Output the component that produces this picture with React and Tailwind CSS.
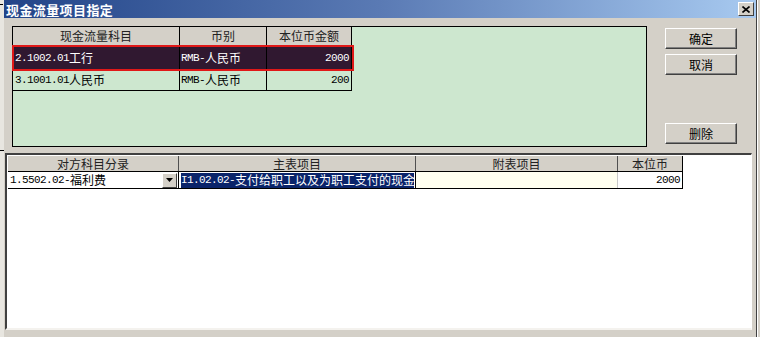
import React from 'react';

// split text so ASCII runs use a half-width mono and CJK runs a CJK face
function Txt({ s }) {
  const parts = s.split(/([\x00-\x7f]+)/).filter(Boolean);
  return (
    <>
      {parts.map((p, i) =>
        /^[\x00-\x7f]+$/.test(p) ? (
          <span key={i} className="font-['Liberation_Mono'] text-[11px] tracking-[-0.6px]">
            {p}
          </span>
        ) : (
          <span key={i} className="font-['Noto_Sans_CJK_SC'] text-[12px]">
            {p}
          </span>
        )
      )}
    </>
  );
}

function Btn({ label }) {
  return (
    <div className="w-[72px] h-[21px] bg-[#d4d0c8] border border-t-white border-l-white border-r-[#404040] border-b-[#404040] shadow-[inset_-1px_-1px_0_#808080] flex items-center justify-center text-black leading-none">
      <Txt s={label} />
    </div>
  );
}

const topRows = [
  { a: '2.1002.01工行', b: 'RMB-人民币', c: '2000', sel: true },
  { a: '3.1001.01人民币', b: 'RMB-人民币', c: '200' },
];

export default function App() {
  return (
    <div className="w-[760px] h-[337px] flex bg-[#d4d0c8] overflow-hidden font-['Noto_Sans_CJK_SC',sans-serif] text-[12px] leading-none">
      <div className="w-[4px] bg-[#e8e6e0] flex flex-col">
        <div className="h-[4px]" />
        <div className="h-px w-[3px] bg-black" />
        <div className="h-[145px]" />
        <div className="h-px w-[4px] bg-black" />
      </div>
      <div className="w-[753px] flex flex-col border-r border-[#404040]">
        {/* title bar */}
        <div className="h-[18px] flex items-center bg-gradient-to-r from-[#224488] via-[#5a7ab4] to-[#a8caf0] pl-[2px] pr-[2px]">
          <span className="text-white font-bold text-[13px] font-['Noto_Sans_CJK_SC'] tracking-[0.4px]">现金流量项目指定</span>
          <div className="ml-auto w-[16px] h-[14px] bg-[#d4d0c8] border border-t-white border-l-white border-r-[#404040] border-b-[#404040] flex items-center justify-center">
            <svg width="8" height="7" viewBox="0 0 8 7">
              <path d="M0.5 0.5 L7.5 6.5 M7.5 0.5 L0.5 6.5" stroke="black" strokeWidth="1.6" />
            </svg>
          </div>
        </div>

        {/* upper area */}
        <div className="flex pt-[8px] pl-[8px] h-[135px]">
          <div className="relative w-[635px] h-[121px] border border-black bg-[#cde7cf]">
            <div className="flex w-[339px] h-[19px] border-b border-black">
              <div className="w-[167px] bg-[#d4d0c8] border-r border-black flex items-center justify-center text-[#222]">
                <Txt s="现金流量科目" />
              </div>
              <div className="w-[87px] bg-[#d4d0c8] border-r border-black flex items-center justify-center text-[#222]">
                <Txt s="币别" />
              </div>
              <div className="w-[85px] bg-[#d4d0c8] border-r border-black flex items-center justify-center text-[#222]">
                <Txt s="本位币金额" />
              </div>
            </div>
            {topRows.map((r, i) => (
              <div
                key={i}
                className={
                  r.sel
                    ? 'flex w-[339px] h-[24px] bg-[#301830] text-white'
                    : 'flex w-[339px] h-[21px] border-b border-black text-black'
                }
              >
                <div className="w-[167px] border-r border-black flex items-center pl-[2px]">
                  <Txt s={r.a} />
                </div>
                <div className="w-[87px] border-r border-black flex items-center pl-[1px]">
                  <Txt s={r.b} />
                </div>
                <div className="w-[85px] border-r border-black flex items-center justify-end pr-[2px]">
                  <Txt s={r.c} />
                </div>
              </div>
            ))}
            <div className="absolute left-[-1px] top-[18px] w-[342px] h-[26px] border-2 border-[#e01818]" />
          </div>
          <div className="ml-[18px] flex flex-col pt-[2px]">
            <Btn label="确定" />
            <div className="h-[5px]" />
            <Btn label="取消" />
            <div className="h-[48px]" />
            <Btn label="删除" />
          </div>
        </div>

        {/* lower grid */}
        <div className="ml-[1px] mr-[4px] h-[177px] border-t-2 border-l-2 border-t-[#404040] border-l-[#404040] border-r border-b-2 border-r-white border-b-[#f4f2ee] bg-white pl-[1px] pt-[1px]">
          <div className="flex h-[16px] w-[675px] border-b border-black bg-[#d4d0c8] text-[#222]">
            <div className="w-[171px] border-r border-[#505050] flex items-center justify-center">
              <Txt s="对方科目分录" />
            </div>
            <div className="w-[237px] border-r border-[#505050] flex items-center justify-center">
              <Txt s="主表项目" />
            </div>
            <div className="w-[202px] border-r border-[#505050] flex items-center justify-center">
              <Txt s="附表项目" />
            </div>
            <div className="w-[65px] border-r border-black flex items-center justify-center">
              <Txt s="本位币" />
            </div>
          </div>
          <div className="flex h-[17px] w-[675px] border-b border-black">
            <div className="w-[171px] border-r border-black flex items-center pl-[2px] bg-white text-black">
              <Txt s="1.5502.02-福利费" />
              <div className="ml-auto w-[15px] h-[15px] mr-[1px] bg-[#d4d0c8] border border-t-white border-l-white border-r-[#404040] border-b-[#404040] flex items-center justify-center">
                <svg width="7" height="4" viewBox="0 0 7 4">
                  <path d="M0 0 H7 L3.5 4 Z" fill="black" />
                </svg>
              </div>
            </div>
            <div className="w-[237px] border-r border-black flex items-center pl-[2px] overflow-hidden whitespace-nowrap">
              <div className="bg-[#0a246a] text-white h-[15px] flex items-center pr-[2px] w-[233px] overflow-hidden">
                <Txt s="I1.02.02-支付给职工以及为职工支付的现金" />
              </div>
            </div>
            <div className="w-[202px] border-r border-[#c8c8c8] bg-[#fffff0]" />
            <div className="w-[65px] border-r border-black flex items-center justify-end pr-[2px] text-black">
              <Txt s="2000" />
            </div>
          </div>
        </div>
      </div>
      <div className="w-[3px] bg-[#d4d0c8] border-l border-white" />
    </div>
  );
}
